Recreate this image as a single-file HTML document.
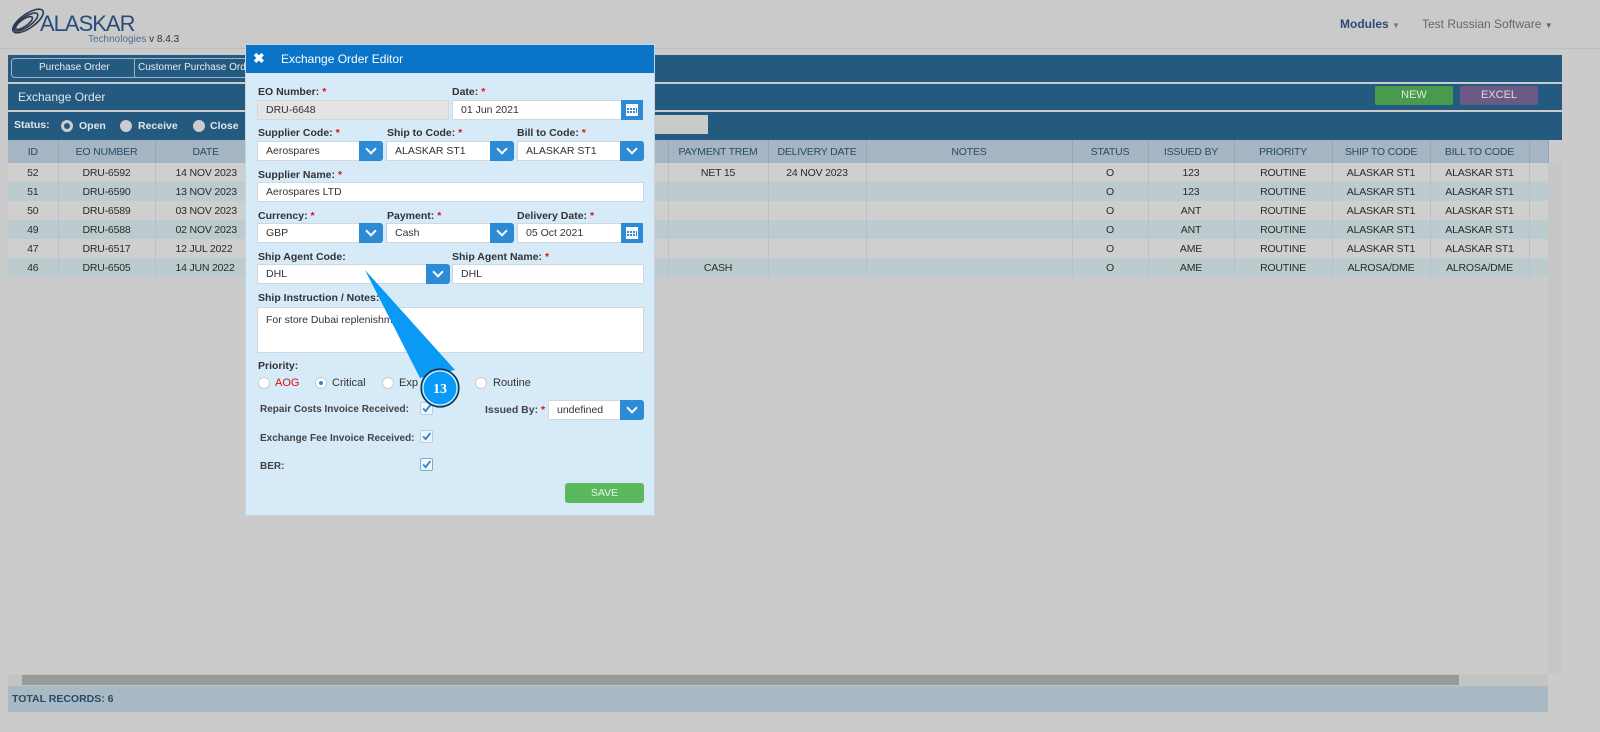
<!DOCTYPE html>
<html><head><meta charset="utf-8">
<style>
*{box-sizing:border-box;margin:0;padding:0}
body{width:1600px;height:732px;background:#cbcbcb;font-family:"Liberation Sans",Arial,sans-serif;font-size:11px;color:#333;position:relative;overflow:hidden}
.a{position:absolute;white-space:nowrap}
.hdr{left:0;top:0;width:1600px;height:49px;background:#cacaca;border-bottom:1px solid #bdbdbd}
.panel{left:8px;top:52px;width:1554px;height:661px;background:#cbcbcb}
.blue{background:#245a80;color:#dfe7ee}
table{border-collapse:collapse;position:absolute;left:8px;top:140px;table-layout:fixed}
td,th{height:19px;text-align:center;font-size:10.5px;border-right:1px solid #b8c0c4;color:#2a2a2a;white-space:nowrap;overflow:hidden;letter-spacing:-0.2px}
th{height:23px;background:#a5b5c3;font-weight:normal;color:#274b67;border-right:1px solid #95a6b4}
tr.o td{background:#cfcfcf}tr.e td{background:#bccbce}
.modal{left:245px;top:44px;width:410px;height:472px;background:#d6eaf8;border:1px solid #c4d4e0}
.mh{left:0;top:0;width:408px;height:28px;background:#0a74c9;color:#fff;font-size:12px}
.lbl{font-size:10.5px;font-weight:bold;color:#333}
.req{color:#d11}
.inp{background:#fff;border:1px solid #cfd8de;height:20px;font-size:10.5px;padding:3px 8px;color:#333;overflow:hidden}
.dd{background:#2d8ad4;width:24px;height:20px;border-radius:0 3px 3px 0}
.dd:after{content:"";position:absolute;left:8px;top:4px;width:6px;height:6px;border-right:2px solid #fff;border-bottom:2px solid #fff;transform:rotate(45deg)}
.cal{background:#2d8ad4;width:22px;height:20px}
.rad{width:12px;height:12px;border-radius:50%;background:#fff;border:1px solid #ccc}
.chk{width:13px;height:13px;border:1px solid #bcd;background:#eef5fb;border-radius:2px}
</style></head><body>
<div class="a hdr">
 <svg class="a" style="left:8px;top:6px" width="40" height="30" viewBox="0 0 40 30"><g fill="none" stroke="#2a3b52" stroke-width="1.6"><ellipse cx="20" cy="15" rx="18" ry="7" transform="rotate(-35 20 15)"/><ellipse cx="18" cy="16" rx="14" ry="5" transform="rotate(-35 18 16)"/><ellipse cx="16" cy="17" rx="10" ry="3.5" transform="rotate(-35 16 17)"/></g></svg>
 <div class="a" style="left:40px;top:11px;font-size:22px;color:#2a4c7a;letter-spacing:-1px">ALASKAR</div>
 <div class="a" style="left:88px;top:34px;font-size:10px;color:#4d6e92">Technologies <span style="color:#333">v 8.4.3</span></div>
 <div class="a" style="left:1340px;top:17px;font-size:12px;font-weight:bold;color:#2a4c72">Modules <span style="font-size:8px;color:#777">▼</span></div>
 <div class="a" style="left:1422px;top:17px;font-size:12px;color:#666">Test Russian Software <span style="font-size:8px">▼</span></div>
</div>
<div class="a panel"></div>
<div class="a blue" style="left:8px;top:55px;width:1554px;height:27px"></div>
<div class="a" style="left:11px;top:58px;width:240px;height:20px;border:1px solid #9fb3c5;border-radius:4px;color:#e6edf3;font-size:10px;overflow:hidden"><span class="a" style="left:27px;top:3px">Purchase Order</span><span class="a" style="left:122px;top:0;height:18px;border-left:1px solid #9fb3c5"></span><span class="a" style="left:126px;top:3px">Customer Purchase Ord</span></div>
<div class="a blue" style="left:8px;top:84px;width:1554px;height:26px"><span class="a" style="left:10px;top:6px;font-size:12px">Exchange Order</span>
 <div class="a" style="left:1367px;top:2px;width:78px;height:19px;background:#4a9a4e;border-radius:2px;color:#d9ecd9;text-align:center;line-height:19px">NEW</div>
 <div class="a" style="left:1452px;top:2px;width:78px;height:19px;background:#6a5a85;border-radius:2px;color:#ddd;text-align:center;line-height:19px">EXCEL</div></div>
<div class="a blue" style="left:8px;top:112px;width:1554px;height:28px;font-size:10.5px;font-weight:bold"><span class="a" style="left:6px;top:7px">Status:</span>
 <span class="a rad" style="left:53px;top:8px;border:3px solid #ccc;background:#245a80"></span><span class="a" style="left:71px;top:8px">Open</span>
 <span class="a rad" style="left:112px;top:8px;background:#ccc"></span><span class="a" style="left:130px;top:8px">Receive</span>
 <span class="a rad" style="left:185px;top:8px;background:#ccc"></span><span class="a" style="left:202px;top:8px">Close</span>
 <div class="a" style="left:640px;top:3px;width:60px;height:19px;background:#cacaca"></div></div>
<table>
<colgroup><col width="50"><col width="97"><col width="513"><col width="100"><col width="98"><col width="206"><col width="76"><col width="86"><col width="98"><col width="98"><col width="99"><col width="19"></colgroup>
<tr><th>ID</th><th>EO NUMBER</th><th style="text-align:left;padding-left:37px">DATE</th><th>PAYMENT TREM</th><th>DELIVERY DATE</th><th>NOTES</th><th>STATUS</th><th>ISSUED BY</th><th>PRIORITY</th><th>SHIP TO CODE</th><th>BILL TO CODE</th><th></th></tr>
<tr class="o"><td>52</td><td>DRU-6592</td><td style="text-align:left;padding-left:20px">14 NOV 2023</td><td>NET 15</td><td>24 NOV 2023</td><td></td><td>O</td><td>123</td><td>ROUTINE</td><td>ALASKAR ST1</td><td>ALASKAR ST1</td><td></td></tr>
<tr class="e"><td>51</td><td>DRU-6590</td><td style="text-align:left;padding-left:20px">13 NOV 2023</td><td></td><td></td><td></td><td>O</td><td>123</td><td>ROUTINE</td><td>ALASKAR ST1</td><td>ALASKAR ST1</td><td></td></tr>
<tr class="o"><td>50</td><td>DRU-6589</td><td style="text-align:left;padding-left:20px">03 NOV 2023</td><td></td><td></td><td></td><td>O</td><td>ANT</td><td>ROUTINE</td><td>ALASKAR ST1</td><td>ALASKAR ST1</td><td></td></tr>
<tr class="e"><td>49</td><td>DRU-6588</td><td style="text-align:left;padding-left:20px">02 NOV 2023</td><td></td><td></td><td></td><td>O</td><td>ANT</td><td>ROUTINE</td><td>ALASKAR ST1</td><td>ALASKAR ST1</td><td></td></tr>
<tr class="o"><td>47</td><td>DRU-6517</td><td style="text-align:left;padding-left:20px">12 JUL 2022</td><td></td><td></td><td></td><td>O</td><td>AME</td><td>ROUTINE</td><td>ALASKAR ST1</td><td>ALASKAR ST1</td><td></td></tr>
<tr class="e"><td>46</td><td>DRU-6505</td><td style="text-align:left;padding-left:20px">14 JUN 2022</td><td>CASH</td><td></td><td></td><td>O</td><td>AME</td><td>ROUTINE</td><td>ALROSA/DME</td><td>ALROSA/DME</td><td></td></tr>
</table>
<div class="a" style="left:1548px;top:163px;width:14px;height:510px;background:#c6c6c6"></div>
<div class="a" style="left:8px;top:674px;width:1540px;height:12px;background:#c4c4c4"></div>
<div class="a" style="left:22px;top:675px;width:1437px;height:10px;background:#999"></div>
<div class="a" style="left:8px;top:686px;width:1540px;height:26px;background:#a9bac4;color:#274b67;font-weight:bold;font-size:10.5px;padding:7px 4px">TOTAL RECORDS: 6</div>

<svg width="0" height="0" style="position:absolute"><defs><symbol id="cal" viewBox="0 0 22 20"><rect x="5" y="4" width="12" height="12" fill="#fff"/><g fill="#2d8ad4"><rect x="6" y="8" width="2" height="2"/><rect x="9" y="8" width="2" height="2"/><rect x="12" y="8" width="2" height="2"/><rect x="6" y="11" width="2" height="2"/><rect x="9" y="11" width="2" height="2"/><rect x="12" y="11" width="2" height="2"/><rect x="15" y="8" width="1" height="5"/></g></symbol><symbol id="ck" viewBox="0 0 13 13"><path d="M2.5 6.5 L5.5 9.5 L11 2.5" fill="none" stroke="#2d8ad4" stroke-width="2.2"/></symbol></defs></svg>

<div class="a modal">
 <div class="a mh"><span class="a" style="left:7px;top:5px;font-size:14px;font-weight:bold">✖</span><span class="a" style="left:35px;top:7px">Exchange Order Editor</span></div>
 <div class="a lbl" style="left:12px;top:41px">EO Number: <span class="req">*</span></div>
 <div class="a lbl" style="left:206px;top:41px">Date: <span class="req">*</span></div>
 <div class="a inp" style="left:11px;top:55px;width:192px;background:#e4e4e4">DRU-6648</div>
 <div class="a inp" style="left:206px;top:55px;width:170px">01 Jun 2021</div><svg class="a cal" style="left:375px;top:55px"><use href="#cal"/></svg>
 <div class="a lbl" style="left:12px;top:82px">Supplier Code: <span class="req">*</span></div>
 <div class="a lbl" style="left:141px;top:82px">Ship to Code: <span class="req">*</span></div>
 <div class="a lbl" style="left:271px;top:82px">Bill to Code: <span class="req">*</span></div>
 <div class="a inp" style="left:11px;top:96px;width:103px">Aerospares</div><div class="a dd" style="left:113px;top:96px"></div>
 <div class="a inp" style="left:140px;top:96px;width:105px">ALASKAR ST1</div><div class="a dd" style="left:244px;top:96px"></div>
 <div class="a inp" style="left:271px;top:96px;width:104px">ALASKAR ST1</div><div class="a dd" style="left:374px;top:96px"></div>
 <div class="a lbl" style="left:12px;top:124px">Supplier Name: <span class="req">*</span></div>
 <div class="a inp" style="left:11px;top:137px;width:387px">Aerospares LTD</div>
 <div class="a lbl" style="left:12px;top:165px">Currency: <span class="req">*</span></div>
 <div class="a lbl" style="left:141px;top:165px">Payment: <span class="req">*</span></div>
 <div class="a lbl" style="left:271px;top:165px">Delivery Date: <span class="req">*</span></div>
 <div class="a inp" style="left:11px;top:178px;width:103px">GBP</div><div class="a dd" style="left:113px;top:178px"></div>
 <div class="a inp" style="left:140px;top:178px;width:105px">Cash</div><div class="a dd" style="left:244px;top:178px"></div>
 <div class="a inp" style="left:271px;top:178px;width:105px">05 Oct 2021</div><svg class="a cal" style="left:375px;top:178px"><use href="#cal"/></svg>
 <div class="a lbl" style="left:12px;top:206px">Ship Agent Code:</div>
 <div class="a lbl" style="left:206px;top:206px">Ship Agent Name: <span class="req">*</span></div>
 <div class="a inp" style="left:11px;top:219px;width:170px">DHL</div><div class="a dd" style="left:180px;top:219px"></div>
 <div class="a inp" style="left:206px;top:219px;width:192px">DHL</div>
 <div class="a lbl" style="left:12px;top:247px">Ship Instruction / Notes:</div>
 <div class="a inp" style="left:11px;top:262px;width:387px;height:46px;padding-top:6px">For store Dubai replenishment</div>
 <div class="a lbl" style="left:12px;top:315px">Priority:</div>
 <span class="a rad" style="left:12px;top:332px"></span><span class="a" style="left:29px;top:332px;color:#d11">AOG</span>
 <span class="a rad" style="left:69px;top:332px"></span><span class="a" style="left:73px;top:336px;width:4px;height:4px;border-radius:50%;background:#2d8ad4"></span><span class="a" style="left:86px;top:332px">Critical</span>
 <span class="a rad" style="left:136px;top:332px"></span><span class="a" style="left:153px;top:332px">Exp</span>
 <span class="a rad" style="left:229px;top:332px"></span><span class="a" style="left:247px;top:332px">Routine</span>
 <div class="a lbl" style="left:14px;top:359px;color:#444;font-size:10px">Repair Costs Invoice Received:</div><svg class="a chk" style="left:174px;top:357px"><use href="#ck"/></svg>
 <div class="a lbl" style="left:239px;top:359px;color:#444">Issued By: <span class="req">*</span></div>
 <div class="a inp" style="left:302px;top:355px;width:73px">undefined</div><div class="a dd" style="left:374px;top:355px"></div>
 <div class="a lbl" style="left:14px;top:388px;color:#444;font-size:10px">Exchange Fee Invoice Received:</div><svg class="a chk" style="left:174px;top:385px"><use href="#ck"/></svg>
 <div class="a lbl" style="left:14px;top:416px;color:#444;font-size:10px">BER:</div><svg class="a chk" style="left:174px;top:413px;border-color:#8ab"><use href="#ck"/></svg>
 <div class="a" style="left:319px;top:438px;width:79px;height:20px;background:#5cb85c;border-radius:3px;color:#e8f5e8;text-align:center;line-height:20px;font-size:10.5px">SAVE</div>
</div>
<svg class="a" style="left:0;top:0" width="1600" height="732"><polygon points="365,270 420,378 455,370" fill="#0a9af5"/><circle cx="440" cy="388" r="19" fill="#0a9af5" stroke="#222" stroke-width="1.2"/><circle cx="440" cy="388" r="17" fill="none" stroke="#fff" stroke-width="1"/><text x="440" y="393" fill="#fff" font-family="Liberation Serif,serif" font-weight="bold" font-size="14" text-anchor="middle">13</text></svg>
</body></html>
